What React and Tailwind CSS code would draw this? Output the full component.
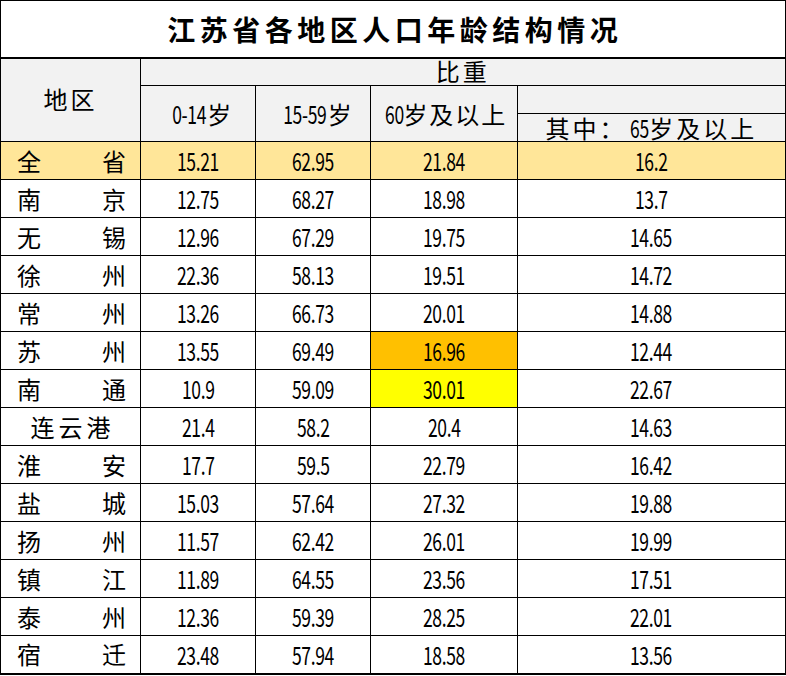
const rows = [
  { name: "全省", v: ["15.21", "62.95", "21.84", "16.2"], total: true },
  { name: "南京", v: ["12.75", "68.27", "18.98", "13.7"] },
  { name: "无锡", v: ["12.96", "67.29", "19.75", "14.65"] },
  { name: "徐州", v: ["22.36", "58.13", "19.51", "14.72"] },
  { name: "常州", v: ["13.26", "66.73", "20.01", "14.88"] },
  { name: "苏州", v: ["13.55", "69.49", "16.96", "12.44"], hi: "bg-[#ffc000]" },
  { name: "南通", v: ["10.9", "59.09", "30.01", "22.67"], hi: "bg-[#ffff00]" },
  { name: "连云港", v: ["21.4", "58.2", "20.4", "14.63"] },
  { name: "淮安", v: ["17.7", "59.5", "22.79", "16.42"] },
  { name: "盐城", v: ["15.03", "57.64", "27.32", "19.88"] },
  { name: "扬州", v: ["11.57", "62.42", "26.01", "19.99"] },
  { name: "镇江", v: ["11.89", "64.55", "23.56", "17.51"] },
  { name: "泰州", v: ["12.36", "59.39", "28.25", "22.01"] },
  { name: "宿迁", v: ["23.48", "57.94", "18.58", "13.56"] },
];

// narrow digits like the spreadsheet font
const Num = ({ children }) => (
  <span className="inline-block text-[25px] scale-x-[0.7] tracking-[-0.5px]">{children}</span>
);

const Label = ({ name }) => {
  if (name.length === 2) {
    return (
      <div className="flex justify-between pl-4 pr-[14px]">
        <span>{name[0]}</span>
        <span>{name[1]}</span>
      </div>
    );
  }
  return <div className="text-center tracking-[4px] pl-[4px]">{name}</div>;
};

export default function App() {
  const cell = "border border-black p-0";
  return (
    <div className="bg-white w-[786px] h-[676px] font-['Noto_Sans_CJK_SC',sans-serif] text-black text-[24px] leading-none">
      <table className="table-fixed border-collapse w-[785px] border-t border-l border-r-2 border-b-2 border-black">
        <colgroup>
          <col className="w-[140px]" />
          <col className="w-[115px]" />
          <col className="w-[115px]" />
          <col className="w-[147px]" />
          <col className="w-[268px]" />
        </colgroup>
        <tbody>
          <tr className="h-[57px]">
            <td colSpan={5} className="border-b-2 border-black p-0 text-center text-[28px] font-semibold tracking-[4.5px] pl-[4px]">
              江苏省各地区人口年龄结构情况
            </td>
          </tr>
          <tr className="h-[28px] bg-[#f2f2f2]">
            <td rowSpan={3} className={`${cell} text-center tracking-[3px] pb-[2px]`}>地区</td>
            <td colSpan={4} className={`${cell} text-center tracking-[3px] align-bottom pb-[2px]`}>比重</td>
          </tr>
          <tr className="h-[28px] bg-[#f2f2f2]">
            <td rowSpan={2} className={`${cell} text-center`}>
              <Num>0-14</Num><span className="-ml-[6px]">岁</span>
            </td>
            <td rowSpan={2} className={`${cell} text-center`}>
              <Num>15-59</Num><span className="-ml-[8px]">岁</span>
            </td>
            <td rowSpan={2} className={`${cell} text-center tracking-[2px]`}>
              <Num>60</Num><span className="-ml-[4px]">岁及以上</span>
            </td>
            <td className={cell}></td>
          </tr>
          <tr className="h-[28px] bg-[#f2f2f2]">
            <td className={`${cell} text-center tracking-[3px] align-bottom pb-[1px]`}>
              其中：<Num>65</Num><span className="-ml-[4px]">岁及以上</span>
            </td>
          </tr>
          {rows.map((r) => (
            <tr key={r.name} className={`h-[38px] ${r.total ? "bg-[#ffe699]" : ""}`}>
              <td className={cell}>
                <Label name={r.name} />
              </td>
              {r.v.map((x, i) => (
                <td key={i} className={`${cell} text-center ${i === 2 && r.hi ? r.hi : ""}`}>
                  <Num>{x}</Num>
                </td>
              ))}
            </tr>
          ))}
        </tbody>
      </table>
    </div>
  );
}
